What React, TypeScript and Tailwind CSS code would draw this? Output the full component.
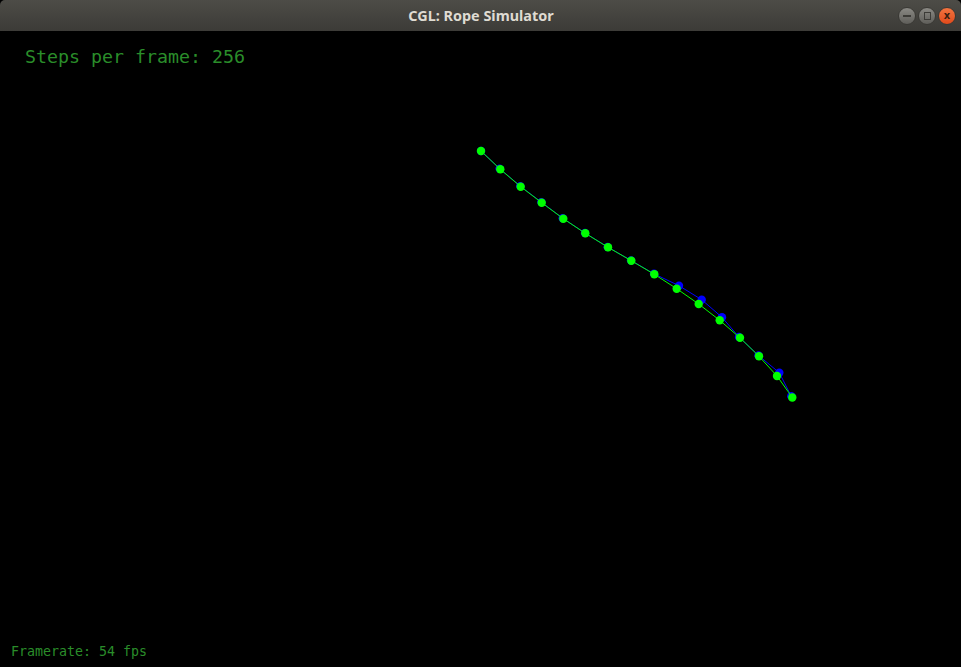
import React from "react";

const green: [number, number][] = [
  [481, 151], [500.3, 169.3], [520.7, 186.7], [541.7, 202.7], [563.3, 218.7],
  [585.3, 233.3], [608, 247.3], [631.3, 260.7], [654.3, 274.3], [676.7, 288.7],
  [698.7, 304], [719.7, 320.3], [740, 337.8], [759, 356.3], [777, 376], [792.3, 397.5],
];
const blue: [number, number][] = [
  [481, 151], [499.6, 168.6], [520.2, 186.1], [541.3, 202.1], [562.7, 218.2],
  [585, 233], [607.7, 247], [631, 260.5], [654, 273.8], [679, 285.7],
  [701.7, 299.7], [722, 317.3], [739, 337], [758.5, 355.5], [779.3, 372.7], [791.3, 396.3],
];

const OFF = 31;

function Rope({ pts, color }: { pts: [number, number][]; color: string }) {
  const d = pts.map((p, i) => `${i ? "L" : "M"}${p[0]} ${p[1] - OFF}`).join(" ");
  return (
    <g>
      <path d={d} stroke={color} strokeWidth={1} fill="none" />
      {pts.map((p, i) => (
        <circle key={i} cx={p[0]} cy={p[1] - OFF} r={4.2} fill={color} />
      ))}
    </g>
  );
}

export default function App() {
  return (
    <div className="w-[961px] h-[667px] flex flex-col bg-black overflow-hidden">
      <div className="h-[31px] shrink-0 flex items-center relative bg-gradient-to-b from-[#4d4c47] to-[#3c3b37] rounded-t-[5px]">
        <div
          className="flex-1 text-center text-[14.4px] font-bold text-[#dfdbd2] pt-[1px] pl-[1px]"
          style={{ fontFamily: '"Noto Sans", "DejaVu Sans", sans-serif' }}
        >
          CGL: Rope Simulator
        </div>
        <div className="absolute right-[5px] top-[7px] flex gap-[2px]">
          <div className="w-[18px] h-[18px] rounded-full bg-gradient-to-b from-[#8a8984] to-[#5f5e5a] border border-[#3a3935] flex items-center justify-center">
            <div className="w-[8px] h-[1.5px] bg-[#3c3b37]" />
          </div>
          <div className="w-[18px] h-[18px] rounded-full bg-gradient-to-b from-[#8a8984] to-[#5f5e5a] border border-[#3a3935] flex items-center justify-center">
            <div className="w-[7px] h-[8px] border border-[#3c3b37]" />
          </div>
          <div className="w-[18px] h-[18px] rounded-full bg-gradient-to-b from-[#f3743f] to-[#e0491a] border border-[#3a3935] flex items-center justify-center text-[#3a2010] text-[10px] leading-none font-bold"
            style={{ fontFamily: '"DejaVu Sans", sans-serif' }}>
            x
          </div>
        </div>
      </div>
      <div className="flex-1 relative flex flex-col justify-between">
        <svg className="absolute inset-0" width={961} height={636}>
          <Rope pts={blue} color="#0000ff" />
          <Rope pts={green} color="#00ff00" />
        </svg>
        <div
          className="relative pl-[25px] pt-[15px] text-[18.3px] leading-[22px] text-[#2a8d2a]"
          style={{ fontFamily: '"DejaVu Sans Mono", monospace' }}
        >
          Steps per frame: 256
        </div>
        <div
          className="relative pl-[11px] pb-[7px] text-[13.3px] leading-[16px] text-[#2a8d2a]"
          style={{ fontFamily: '"DejaVu Sans Mono", monospace' }}
        >
          Framerate: 54 fps
        </div>
      </div>
    </div>
  );
}
